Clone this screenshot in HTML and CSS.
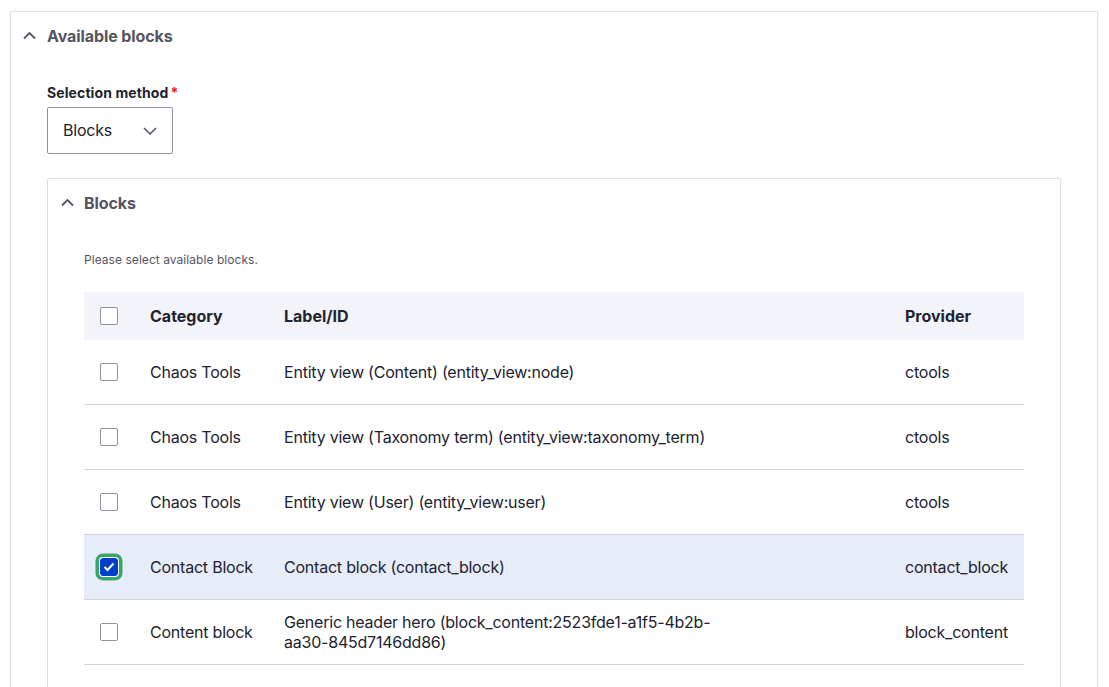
FILE: index.html
```html
<!DOCTYPE html>
<html>
<head>
<meta charset="utf-8">
<link rel="stylesheet" href="styles.css">
</head>
<body>
<div class="details outer">
  <div class="summary">
    <svg class="chev" width="13" height="9" viewBox="0 0 13 9"><path d="M1 7.5 L6.5 2 L12 7.5" fill="none" stroke="#545560" stroke-width="1.8"/></svg>
    <span>Available blocks</span>
  </div>
  <div class="content outer-content">
    <div class="label">Selection method<span class="req">*</span></div>
    <div class="select">
      <span>Blocks</span>
      <svg width="14" height="8" viewBox="0 0 14 8"><path d="M1 1 L7 7 L13 1" fill="none" stroke="#545560" stroke-width="1.5"/></svg>
    </div>
    <div class="details inner">
      <div class="summary">
        <svg class="chev" width="13" height="9" viewBox="0 0 13 9"><path d="M1 7.5 L6.5 2 L12 7.5" fill="none" stroke="#545560" stroke-width="1.8"/></svg>
        <span>Blocks</span>
      </div>
      <div class="content inner-content">
        <p class="desc">Please select available blocks.</p>
        <table class="tbl">
          <colgroup><col class="c1"><col class="c2"><col class="c3"><col class="c4"></colgroup>
          <thead>
            <tr><th><span class="cb"></span></th><th>Category</th><th>Label/ID</th><th>Provider</th></tr>
          </thead>
          <tbody>
            <tr><td><span class="cb"></span></td><td>Chaos Tools</td><td class="lbl">Entity view (Content) (entity_view:node)</td><td>ctools</td></tr>
            <tr><td><span class="cb"></span></td><td>Chaos Tools</td><td class="lbl">Entity view (Taxonomy term) (entity_view:taxonomy_term)</td><td>ctools</td></tr>
            <tr><td><span class="cb"></span></td><td>Chaos Tools</td><td class="lbl">Entity view (User) (entity_view:user)</td><td>ctools</td></tr>
            <tr class="sel"><td><span class="cb checked"><svg width="12" height="10" viewBox="0 0 12 10"><path d="M1.5 5 L4.5 8 L10.5 1.5" fill="none" stroke="#fff" stroke-width="2"/></svg></span></td><td>Contact Block</td><td class="lbl">Contact block (contact_block)</td><td>contact_block</td></tr>
            <tr><td><span class="cb"></span></td><td>Content block</td><td class="lbl">Generic header hero (block_content:2523fde1-a1f5-4b2b-aa30-845d7146dd86)</td><td>block_content</td></tr>
          </tbody>
        </table>
      </div>
    </div>
  </div>
</div>
</body>
</html>
```
FILE: styles.css
```css
html, body {
  margin: 0;
  padding: 0;
  background: #fff;
}
body {
  font-family: Inter, "Liberation Sans", Arial, sans-serif;
  color: #222330;
  padding: 11px 11px 0 10px;
  height: 687px;
  overflow: hidden;
  box-sizing: border-box;
}
.details {
  border: 1px solid #dedfe4;
  border-radius: 2px;
  background: #fff;
}
.outer {
  min-height: 760px;
}
.summary {
  height: 48px;
  display: flex;
  align-items: center;
  font-size: 16px;
  font-weight: 700;
  color: #545560;
  letter-spacing: -0.1px;
}
.outer > .summary {
  padding-left: 12px;
}
.inner > .summary {
  padding-left: 13px;
}
.chev {
  margin-right: 11px;
  margin-top: -1px;
}
.inner .chev {
  margin-right: 10px;
}
.outer-content {
  padding: 23px 36px 0 36px;
}
.label {
  font-size: 14px;
  font-weight: 700;
  line-height: 20px;
  margin-bottom: 4px;
  letter-spacing: 0.1px;
}
.req {
  color: #dc2323;
  margin-left: 2px;
}
.select {
  height: 45px;
  border: 1px solid #8e929c;
  border-radius: 2px;
  display: flex;
  align-items: center;
  justify-content: space-between;
  padding: 0 15px 0 15px;
  box-sizing: content-box;
  width: 94px;
  font-size: 16px;
  letter-spacing: -0.2px;
}
.select span {
  margin-top: -2px;
}
.select svg {
  margin-top: 1px;
}
.inner {
  margin-top: 24px;
  min-height: 560px;
}
.inner-content {
  padding: 0 36px 0 36px;
}
.desc {
  margin: 25px 0 24px;
  font-size: 12px;
  line-height: 16px;
  color: #545560;
  letter-spacing: 0.05px;
}
.tbl {
  width: 100%;
  border-collapse: collapse;
  table-layout: fixed;
  font-size: 16px;
}
.c1 { width: 66px; }
.c2 { width: 134px; }
.c3 { width: 621px; }
.tbl th {
  background: #f3f4f9;
  height: 48px;
  text-align: left;
  font-weight: 700;
  padding: 0;
}
.tbl td {
  height: 64px;
  border-bottom: 1px solid #d3d4d9;
  padding: 0;
  line-height: 20px;
  letter-spacing: -0.22px;
}
.tbl th:first-child, .tbl td:first-child {
  padding-left: 16px;
}
.tbl td.lbl {
  padding-right: 175px;
}
.tbl tr.sel td {
  background: #e6ecf8;
}
.cb {
  display: block;
  width: 16px;
  height: 16px;
  border: 1px solid #8e929c;
  border-radius: 2px;
  background: #fff;
  box-sizing: content-box;
}
.cb.checked {
  background: #003ecc;
  border-color: #003ecc;
  display: flex;
  align-items: center;
  justify-content: center;
  box-shadow: 0 0 0 1px #fff, 0 0 0 4.5px #3aa56b;
  border-radius: 3px;
}
```
